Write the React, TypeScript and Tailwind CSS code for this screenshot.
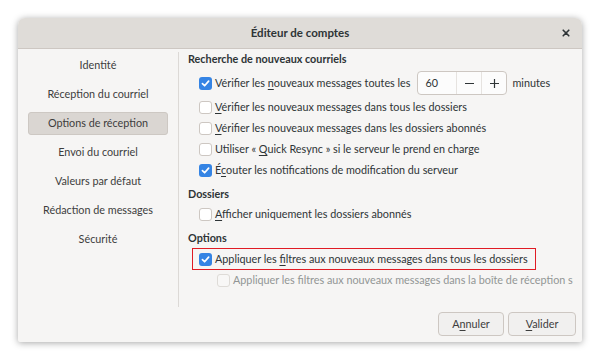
import type { ReactNode } from 'react';

const font = "font-['Lato','Noto_Sans',sans-serif]";

const Check = ({ checked, disabled }: { checked?: boolean; disabled?: boolean }) =>
  checked ? (
    <span className="w-[13px] h-[13px] rounded-[3px] bg-[#3584e4] flex items-center justify-center shrink-0">
      <svg width="9" height="9" viewBox="0 0 10 10" fill="none">
        <path d="M1.6 5.2 L4 7.5 L8.5 2.4" stroke="white" strokeWidth="1.9" strokeLinecap="round" strokeLinejoin="round" />
      </svg>
    </span>
  ) : (
    <span
      className={`w-[13px] h-[13px] rounded-[3px] border shrink-0 ${
        disabled ? 'border-[#dedbd7] bg-[#f8f7f6]' : 'border-[#cdc7c2] bg-white'
      }`}
    />
  );

const Row = ({ checked, children }: { checked?: boolean; children: ReactNode }) => (
  <div className="h-[21px] flex items-center gap-[3px] pl-[11px]">
    <Check checked={checked} />
    <span className="whitespace-nowrap">{children}</span>
  </div>
);

const Heading = ({ children }: { children: ReactNode }) => (
  <div className="h-[19px] flex items-center font-bold text-[#2e3436]">{children}</div>
);

const U = ({ children }: { children: ReactNode }) => (
  <span className="underline underline-offset-[2px] decoration-[1px]">{children}</span>
);

const pages = [
  'Identité',
  'Réception du courriel',
  'Options de réception',
  'Envoi du courriel',
  'Valeurs par défaut',
  'Rédaction de messages',
  'Sécurité',
];

export default function App() {
  return (
    <div className={`w-[600px] h-[362px] bg-white pt-[18px] pl-[18px] ${font} text-[10.8px] text-[#2e3436]`}>
      <div className="w-[564px] h-[324px] bg-[#f6f5f4] rounded-t-[7px] rounded-b-[2px] shadow-[0_1px_7px_rgba(0,0,0,0.35)] flex flex-col overflow-hidden">
        {/* barre de titre */}
        <div className="h-[31px] shrink-0 bg-[#dfdcd8] border-b border-[#cdc7c2] flex items-center relative">
          <div className="flex-1 text-center font-bold text-[11.5px] text-[#2e3436]">Éditeur de comptes</div>
          <span className="absolute right-[10px] top-[9px] text-[#2e3436]">
            <svg width="12" height="12" viewBox="0 0 12 12">
              <path d="M3.2 3.2 L8.8 8.8 M8.8 3.2 L3.2 8.8" stroke="#2e3436" strokeWidth="1.6" strokeLinecap="round" />
            </svg>
          </span>
        </div>

        <div className="flex h-[258px] shrink-0">
          {/* liste des pages */}
          <div className="w-[160px] shrink-0 px-[10px] pt-[2px] text-[#3d3d3d]">
            {pages.map((p, i) => (
              <div key={p} className="h-[29px] flex items-center">
                <div
                  className={`w-full h-[23px] flex items-center justify-center rounded-[3px] ${
                    i === 2 ? 'bg-[#dad6d2] border border-[#cdc8c3]' : ''
                  }`}
                >
                  {p}
                </div>
              </div>
            ))}
          </div>
          <div className="w-px bg-[#dcd9d6] mt-[3px] shrink-0" />

          {/* contenu */}
          <div className="w-[394px] h-[247px] overflow-hidden pl-[9px] pt-[1px]">
            <div className="h-[19px] flex items-center font-bold">Recherche de nouveaux courriels</div>
            <div className="h-[28px] flex items-center gap-[3px] pl-[11px]">
              <Check checked />
              <span className="whitespace-nowrap">
                Vérifier les <U>n</U>ouveaux messages toutes les
              </span>
              <div className="ml-[4px] w-[90px] h-[24px] rounded-[4px] border border-[#cdc7c2] bg-[#fcfcfc] flex">
                <span className="w-[39px] pl-[7px] flex items-center border-r border-[#e6e3e0]">60</span>
                <span className="w-[25px] flex items-center justify-center border-r border-[#e6e3e0]">
                  <svg width="11" height="11" viewBox="0 0 11 11">
                    <path d="M1 5.5 H10" stroke="#2e3436" strokeWidth="1.2" />
                  </svg>
                </span>
                <span className="flex-1 flex items-center justify-center">
                  <svg width="11" height="11" viewBox="0 0 11 11">
                    <path d="M1 5.5 H10 M5.5 1 V10" stroke="#2e3436" strokeWidth="1.2" />
                  </svg>
                </span>
              </div>
              <span className="ml-[2px]">minutes</span>
            </div>
            <Row>
              <U>V</U>érifier les nouveaux messages dans tous les dossiers
            </Row>
            <Row>
              <U>V</U>érifier les nouveaux messages dans les dossiers abonnés
            </Row>
            <Row>
              Utiliser « <U>Q</U>uick Resync » si le serveur le prend en charge
            </Row>
            <Row checked>
              É<U>c</U>outer les notifications de modification du serveur
            </Row>

            <div className="mt-[4px]">
              <Heading>Dossiers</Heading>
            </div>
            <Row>
              <U>A</U>fficher uniquement les dossiers abonnés
            </Row>

            <div className="mt-[4px]">
              <Heading>Options</Heading>
            </div>
            <div className="ml-[4px] w-[344px] h-[22px] border border-[#e01b24] flex items-center gap-[3px] pl-[6px]">
              <Check checked />
              <span className="whitespace-nowrap">
                Appliquer les <U>fi</U>ltres aux nouveaux messages dans tous les dossiers
              </span>
            </div>
            <div className="h-[21px] flex items-center gap-[3px] pl-[29px] text-[#929595]">
              <Check disabled />
              <span className="whitespace-nowrap">
                Appliquer les filtres aux nouveaux messages dans la boîte de réception sur ce serveur
              </span>
            </div>
            <div className="h-[10px] flex items-end pl-[11px]">
              <span className="w-[12px] h-[3px] border-t border-[#e2dfdc]" />
            </div>
          </div>
        </div>

        {/* boutons */}
        <div className="flex justify-end gap-[4px] pr-[6px] pt-[5px]">
          <button className="w-[66px] h-[24px] rounded-[4px] border border-[#cdc7c2] bg-[#f1f0ef] text-[#3d3d3d]">
            A<U>n</U>nuler
          </button>
          <button className="w-[68px] h-[24px] rounded-[4px] border border-[#cdc7c2] bg-[#f1f0ef] text-[#3d3d3d]">
            <U>V</U>alider
          </button>
        </div>
      </div>
    </div>
  );
}
